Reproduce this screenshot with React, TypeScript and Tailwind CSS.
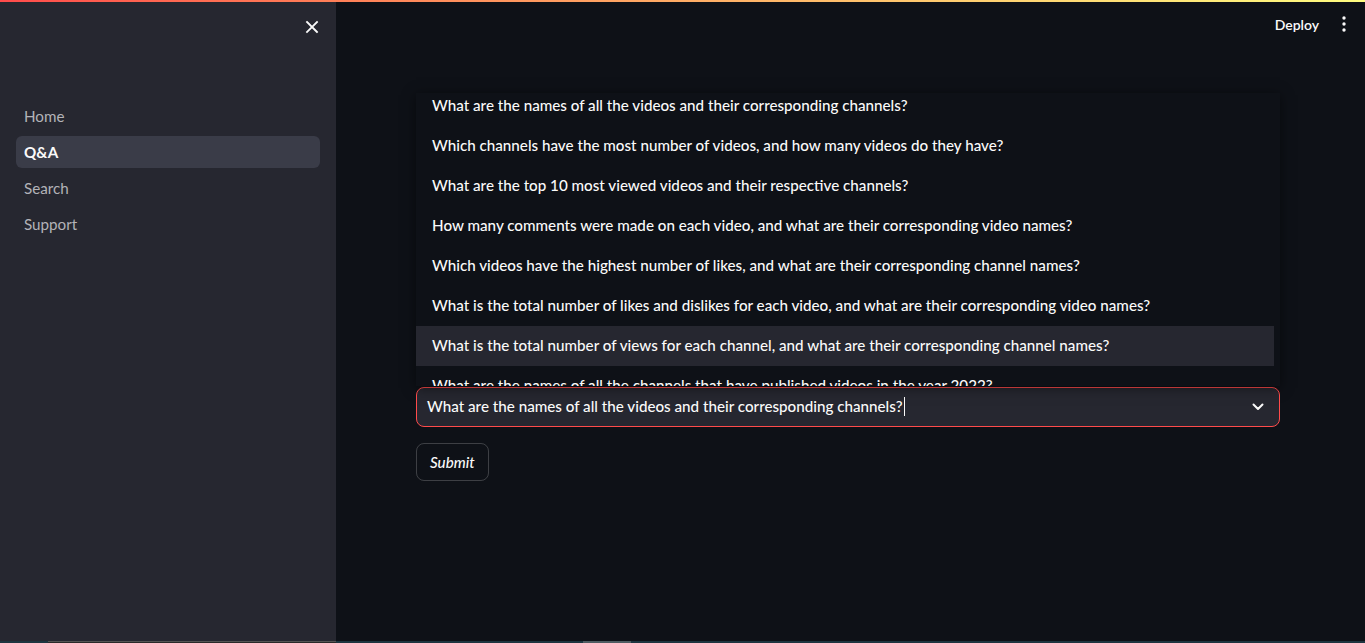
import { useState } from "react";

const questions = [
  "What are the names of all the videos and their corresponding channels?",
  "Which channels have the most number of videos, and how many videos do they have?",
  "What are the top 10 most viewed videos and their respective channels?",
  "How many comments were made on each video, and what are their corresponding video names?",
  "Which videos have the highest number of likes, and what are their corresponding channel names?",
  "What is the total number of likes and dislikes for each video, and what are their corresponding video names?",
  "What is the total number of views for each channel, and what are their corresponding channel names?",
  "What are the names of all the channels that have published videos in the year 2022?",
];

const pages = ["Home", "Q&A", "Search", "Support"];

function CloseIcon() {
  return (
    <svg width="14" height="14" viewBox="0 0 14 14" fill="none">
      <path d="M2 2L12 12M12 2L2 12" stroke="#fafafa" strokeWidth="1.8" strokeLinecap="square" />
    </svg>
  );
}

function KebabIcon() {
  return (
    <svg width="4" height="16" viewBox="0 0 4 16" fill="#fafafa">
      <circle cx="2" cy="2" r="1.7" />
      <circle cx="2" cy="8" r="1.7" />
      <circle cx="2" cy="14" r="1.7" />
    </svg>
  );
}

function ChevronDown() {
  return (
    <svg width="12" height="8" viewBox="0 0 12 8" fill="none">
      <path d="M1.5 1.5L6 6L10.5 1.5" stroke="#fafafa" strokeWidth="2" strokeLinecap="round" strokeLinejoin="round" />
    </svg>
  );
}

function Sidebar() {
  const active = "Q&A";
  return (
    <aside className="w-[336px] shrink-0 bg-[#262730] flex flex-col">
      <div className="flex justify-end pt-[17px] pr-[16px] h-[98px]">
        <button className="w-[16px] h-[16px] flex items-center justify-center">
          <CloseIcon />
        </button>
      </div>
      <nav className="flex flex-col gap-1 px-4">
        {pages.map((p) => (
          <a
            key={p}
            className={`h-8 flex items-center px-2 rounded-md text-[15.2px] ${
              p === active
                ? "bg-[#3a3c48] text-[#fafafa] font-bold"
                : "text-[#b3b3b8]"
            }`}
          >
            {p}
          </a>
        ))}
      </nav>
    </aside>
  );
}

function Select() {
  const [value] = useState(questions[0]);
  return (
    <div className="relative">
      <div className="absolute left-0 right-0 bottom-[41px] h-[293px] overflow-hidden bg-[#0e1117] shadow-[0_2px_12px_rgba(0,0,0,0.5)]">
        <ul className="-mt-[7px] pr-[6px]">
          {questions.map((q, i) => (
            <li
              key={q}
              className={`h-10 flex items-center px-4 pb-px text-[15.2px] font-medium text-[#fafafa] whitespace-nowrap ${
                i === 6 ? "bg-[#262730]" : ""
              }`}
            >
              {q}
            </li>
          ))}
        </ul>
      </div>
      <div className="h-10 rounded-lg border border-[#ff4b4b] bg-[#262730] flex items-center pl-[10px] pr-[15px]">
        <span className="flex-1 text-[15.2px] font-medium text-[#fafafa] flex items-center -mt-px">
          {value}
          <span className="inline-block w-px h-[19px] bg-[#fafafa] ml-px" />
        </span>
        <ChevronDown />
      </div>
    </div>
  );
}

export default function App() {
  return (
    <div
      className="w-full h-screen flex flex-col bg-[#0e1117] text-[#fafafa] overflow-hidden"
      style={{ fontFamily: "Lato, 'Noto Sans', sans-serif" }}
    >
      <div className="h-[2px] shrink-0 bg-gradient-to-r from-[#ff4b4b] to-[#fffd80]" />
      <div className="flex flex-1 min-h-0">
        <Sidebar />
        <main className="flex-1 flex flex-col">
          <header className="h-[44px] flex items-center justify-end pr-[19px] gap-[23px]">
            <span className="text-[14px] font-semibold text-[#fafafa]">Deploy</span>
            <KebabIcon />
          </header>
          <div className="pl-[80px] pr-[85px] pt-[341px]">
            <Select />
            <button className="mt-4 h-[38px] px-[13px] rounded-lg border border-[#fafafa33] text-[15.2px] font-medium italic text-[#fafafa]">
              Submit
            </button>
          </div>
        </main>
      </div>
      <div className="h-[2px] shrink-0 flex bg-[#1d3540]">
        <div className="w-[48px]" />
        <div className="w-[288px] bg-[#2a2a2a] border-t border-[#555]" />
        <div className="w-[247px]" />
        <div className="w-[48px] bg-[#4f5c62]" />
      </div>
    </div>
  );
}
